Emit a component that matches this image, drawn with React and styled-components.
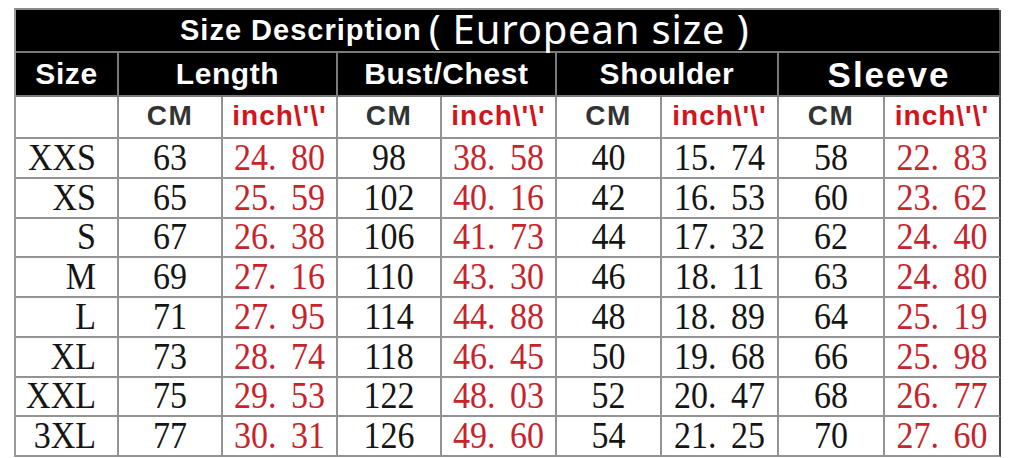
import React from "react";
import styled, { createGlobalStyle, css } from "styled-components";

const GlobalStyle = createGlobalStyle`
  html, body { margin: 0; padding: 0; background: #ffffff; }
  body { font-family: "Liberation Sans", Arial, sans-serif; }
`;

const Page = styled.div`
  padding: 8px 0 0 14px;
  width: 1024px;
  height: 458px;
  box-sizing: border-box;
  overflow: hidden;
`;

const Table = styled.div`
  display: grid;
  grid-template-columns: 103px 104px 115px 104px 115px 105px 117px 106px 116px;
  grid-template-rows: 43px 44px 42px repeat(8, 39.75px);
  width: 985px;
  border-top: 2px solid #8a8a8a;
  border-left: 2px solid #9a9a9a;
  box-sizing: border-box;
`;

const cellBase = css`
  box-sizing: border-box;
  display: flex;
  align-items: center;
  justify-content: center;
  border-right: 2px solid ${(p) => (p.$last ? "#4a4a4a" : "#939393")};
  border-bottom: 2px solid #939393;
  white-space: nowrap;
  line-height: 1;
`;

const TitleCell = styled.div`
  ${cellBase};
  grid-column: 1 / -1;
  background: #000;
  color: #fff;
  justify-content: flex-start;
  padding-left: 164px;
  border-bottom-color: #7a7a7a;
  border-right-color: #4a4a4a;
  gap: 7px;
`;

const TitleBold = styled.span`
  font-weight: 700;
  font-size: 29px;
  letter-spacing: 1px;
  line-height: 1;
`;

const TitleLight = styled.span`
  font-family: "Noto Sans", "Open Sans", sans-serif;
  font-size: 40px;
  font-weight: 400;
  letter-spacing: 0.8px;
  line-height: 1;
  margin-top: -4px;
`;

const HeadCell = styled.div`
  ${cellBase};
  grid-column: span ${(p) => p.$span || 1};
  background: #000;
  color: #fff;
  font-weight: 700;
  font-size: ${(p) => (p.$big ? "35px" : "30px")};
  letter-spacing: ${(p) => (p.$big ? "2px" : "0.6px")};
  border-right-color: ${(p) => (p.$last ? "#4a4a4a" : "#7a7a7a")};
  border-bottom-color: #7a7a7a;
`;

const UnitCell = styled.div`
  ${cellBase};
  background: #fff;
  font-weight: 700;
  font-size: 28px;
  letter-spacing: ${(p) => (p.$red ? "1px" : "1.5px")};
  color: ${(p) => (p.$red ? "#d2141c" : "#333333")};
  padding-bottom: 3px;
`;

const serifText = css`
  font-family: "Liberation Serif", "Times New Roman", serif;
  font-size: 34px;
`;

const SizeCell = styled.div`
  ${cellBase};
  ${serifText};
  justify-content: flex-end;
  padding-right: 21px;
  color: #151515;
`;

const DataCell = styled.div`
  ${cellBase};
  ${serifText};
  word-spacing: 6px;
  color: ${(p) => (p.$red ? "#c8232b" : "#151515")};
`;

const Tall = styled.span`
  display: inline-block;
  line-height: 1;
  transform: scaleY(1.1);
`;

const groups = [
  { label: "Length" },
  { label: "Bust/Chest" },
  { label: "Shoulder" },
  { label: "Sleeve", big: true },
];

const units = [
  { t: "CM", red: false },
  { t: "inch\\'\\'", red: true },
];

const redCols = [false, false, true, false, true, false, false, false, true];

const rows = [
  ["XXS", "63", "24. 80", "98", "38. 58", "40", "15. 74", "58", "22. 83"],
  ["XS", "65", "25. 59", "102", "40. 16", "42", "16. 53", "60", "23. 62"],
  ["S", "67", "26. 38", "106", "41. 73", "44", "17. 32", "62", "24. 40"],
  ["M", "69", "27. 16", "110", "43. 30", "46", "18. 11", "63", "24. 80"],
  ["L", "71", "27. 95", "114", "44. 88", "48", "18. 89", "64", "25. 19"],
  ["XL", "73", "28. 74", "118", "46. 45", "50", "19. 68", "66", "25. 98"],
  ["XXL", "75", "29. 53", "122", "48. 03", "52", "20. 47", "68", "26. 77"],
  ["3XL", "77", "30. 31", "126", "49. 60", "54", "21. 25", "70", "27. 60"],
];

export default function App() {
  return (
    <>
      <GlobalStyle />
      <Page>
        <Table>
          <TitleCell>
            <TitleBold>Size Description</TitleBold>
            <TitleLight>( European size )</TitleLight>
          </TitleCell>

          <HeadCell>Size</HeadCell>
          {groups.map((g, i) => (
            <HeadCell key={g.label} $span={2} $big={g.big} $last={i === groups.length - 1}>
              {g.label}
            </HeadCell>
          ))}

          <UnitCell />
          {groups.map((g, gi) =>
            units.map((u, ui) => (
              <UnitCell
                key={`${g.label}-${u.t}`}
                $red={u.red}
                $last={gi === groups.length - 1 && ui === 1}
              >
                {u.t}
              </UnitCell>
            ))
          )}

          {rows.map((r) => (
            <React.Fragment key={r[0]}>
              <SizeCell>
                <Tall>{r[0]}</Tall>
              </SizeCell>
              {r.slice(1).map((v, ci) => (
                <DataCell key={ci} $red={redCols[ci + 1]} $last={ci === 7}>
                  <Tall>{v}</Tall>
                </DataCell>
              ))}
            </React.Fragment>
          ))}
        </Table>
      </Page>
    </>
  );
}
